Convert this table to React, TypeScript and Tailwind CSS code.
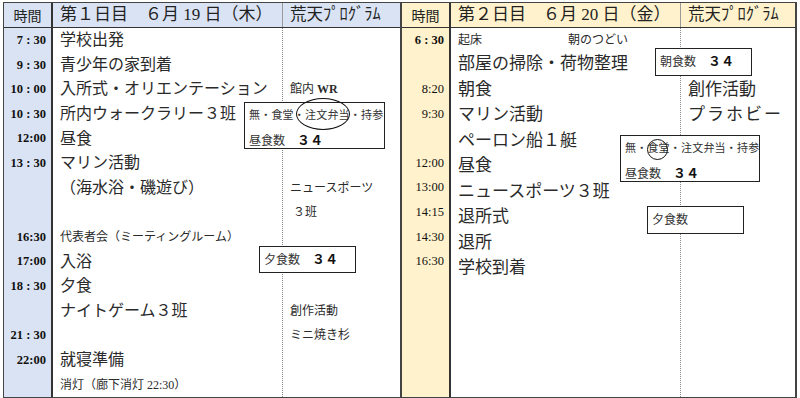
import React from 'react';

type Row = {
    t?: string;
    tb?: boolean;
    m?: React.ReactNode;
    small?: boolean;
    s?: React.ReactNode;
    sLarge?: boolean;
};

const leftRows: Row[] = [
    { t: '7 : 30', tb: true, m: '学校出発' },
    { t: '9 : 30', tb: true, m: '青少年の家到着' },
    {
        t: '10 : 00',
        tb: true,
        m: '入所式・オリエンテーション',
        s: (
            <span>
                館内 <span className="font-bold">WR</span>
            </span>
        ),
    },
    { t: '10 : 30', tb: true, m: '所内ウォークラリー３班' },
    { t: '12:00', tb: true, m: '昼食' },
    { t: '13 : 30', tb: true, m: 'マリン活動' },
    { m: '（海水浴・磯遊び）', s: 'ニュースポーツ' },
    { s: <span className="pl-[3px]">３班</span> },
    { t: '16:30', tb: true, m: '代表者会（ミーティングルーム）', small: true },
    { t: '17:00', tb: true, m: '入浴' },
    { t: '18 : 30', tb: true, m: '夕食' },
    { m: 'ナイトゲーム３班', s: '創作活動' },
    { t: '21 : 30', tb: true, s: 'ミニ焼き杉' },
    { t: '22:00', tb: true, m: '就寝準備' },
    { m: '消灯（廊下消灯 22:30）', small: true },
];

const rightRows: Row[] = [
    {
        t: '6 : 30',
        tb: true,
        small: true,
        m: (
            <span className="flex">
                <span className="w-[110px]">起床</span>
                <span>朝のつどい</span>
            </span>
        ),
    },
    { m: '部屋の掃除・荷物整理' },
    { t: '8:20', m: '朝食', s: '創作活動', sLarge: true },
    { t: '9:30', m: 'マリン活動', s: <span className="tracking-[2px]">プラホビー</span>, sLarge: true },
    { m: 'ペーロン船１艇' },
    { t: '12:00', m: '昼食' },
    { t: '13:00', m: 'ニュースポーツ３班' },
    { t: '14:15', m: '退所式' },
    { t: '14:30', m: '退所' },
    { t: '16:30', m: '学校到着' },
    {},
    {},
    {},
    {},
    {},
];

const font = "font-['Liberation_Serif','Noto_Sans_CJK_JP',serif]";

const Box = ({ className, children }: { className: string; children: React.ReactNode }) => (
    <div
        className={`absolute border-[1.5px] border-[#222] bg-white text-[11px] text-[#333] pl-[4px] whitespace-nowrap ${className}`}
    >
        {children}
    </div>
);

const Day = ({
    rows,
    bg,
    title,
    mainSize,
    first,
    children,
}: {
    rows: Row[];
    bg: string;
    title: React.ReactNode;
    mainSize: string;
    first?: boolean;
    children?: React.ReactNode;
}) => (
    <div
        className={`relative flex flex-col h-[396px] w-[397px] border-y border-[#444] ${
            first ? 'border-l' : 'border-x-2'
        }`}
    >
        {/* header */}
        <div className={`flex h-[25px] border-b border-[#333] ${bg}`}>
            <div className="w-[49px] shrink-0 border-r-2 border-[#333] flex items-center justify-center text-[14px] text-[#222] font-['Noto_Sans_CJK_JP',sans-serif]">
                時間
            </div>
            <div className="w-[229px] shrink-0 flex items-center pl-[7px] text-[17px] text-[#222] whitespace-nowrap">
                {title}
            </div>
            <div className="flex-1 border-l border-[#999] flex items-center pl-[7px] text-[16.5px] text-[#222] whitespace-nowrap">
                荒天ﾌﾟﾛｸﾞﾗﾑ
            </div>
        </div>

        {/* body */}
        <div className="flex flex-1">
            <div className={`w-[49px] shrink-0 flex flex-col border-r-2 border-[#333] ${bg}`}>
                {rows.map((r, i) => (
                    <div
                        key={i}
                        className={`flex-1 flex items-center justify-end pr-[5px] text-[12.5px] text-[#111] whitespace-pre ${
                            r.tb ? 'font-bold' : ''
                        }`}
                    >
                        {r.t}
                    </div>
                ))}
            </div>
            <div className="w-[229px] shrink-0 flex flex-col">
                {rows.map((r, i) => (
                    <div
                        key={i}
                        className={`flex-1 flex items-center pl-[7px] whitespace-nowrap text-[#2a2a2a] ${
                            r.small ? 'text-[12px]' : mainSize
                        }`}
                    >
                        {r.m}
                    </div>
                ))}
            </div>
            <div className="flex-1 flex flex-col border-l border-dotted border-[#888]">
                {rows.map((r, i) => (
                    <div
                        key={i}
                        className={`flex-1 flex items-center pl-[7px] whitespace-nowrap text-[#2a2a2a] ${
                            r.sLarge ? 'text-[17px]' : 'text-[12px]'
                        }`}
                    >
                        {r.s}
                    </div>
                ))}
            </div>
        </div>

        {children}
    </div>
);

export default function App() {
    return (
        <div className={`w-[800px] h-[398px] bg-white overflow-hidden flex pt-[2px] pl-[3px] ${font}`}>
            <Day
                rows={leftRows}
                bg="bg-[#dae3f3]"
                mainSize="text-[16px]"
                first
                title={<>第１日目　６月 19 日（木）</>}
            >
                <Box className="left-[240px] top-[99px] w-[141px] h-[47px] leading-[25px]">
                    <div className="tracking-[0.2px]">無・食堂・注文弁当・持参</div>
                    <div className="text-[12px]">
                        昼食数　<span className="font-bold text-[13px] text-[#111]">３４</span>
                    </div>
                </Box>
                <div className="absolute left-[292px] top-[95px] w-[54px] h-[32px] rounded-[50%] border-[1.5px] border-[#111]" />
                <Box className="left-[255px] top-[243px] w-[97px] h-[27px] flex items-center text-[12px]">
                    夕食数　<span className="font-bold text-[13px] text-[#111]">３４</span>
                </Box>
            </Day>
            <Day
                rows={rightRows}
                bg="bg-[#fff2cc]"
                mainSize="text-[17px]"
                title={<>第２日目　６月 20 日（金）</>}
            >
                <Box className="left-[253px] top-[45px] w-[97px] h-[28px] flex items-center text-[12px]">
                    朝食数　<span className="font-bold text-[13px] text-[#111]">３４</span>
                </Box>
                <Box className="left-[218px] top-[132px] w-[140px] h-[47px] leading-[25px]">
                    <div className="tracking-[0.2px]">無・食堂・注文弁当・持参</div>
                    <div className="text-[12px]">
                        昼食数　<span className="font-bold text-[13px] text-[#111]">３４</span>
                    </div>
                </Box>
                <div className="absolute left-[245px] top-[136px] w-[21px] h-[21px] rounded-full border-[1.5px] border-[#111]" />
                <Box className="left-[245px] top-[203px] w-[97px] h-[28px] flex items-center text-[12px]">
                    夕食数
                </Box>
            </Day>
        </div>
    );
}
